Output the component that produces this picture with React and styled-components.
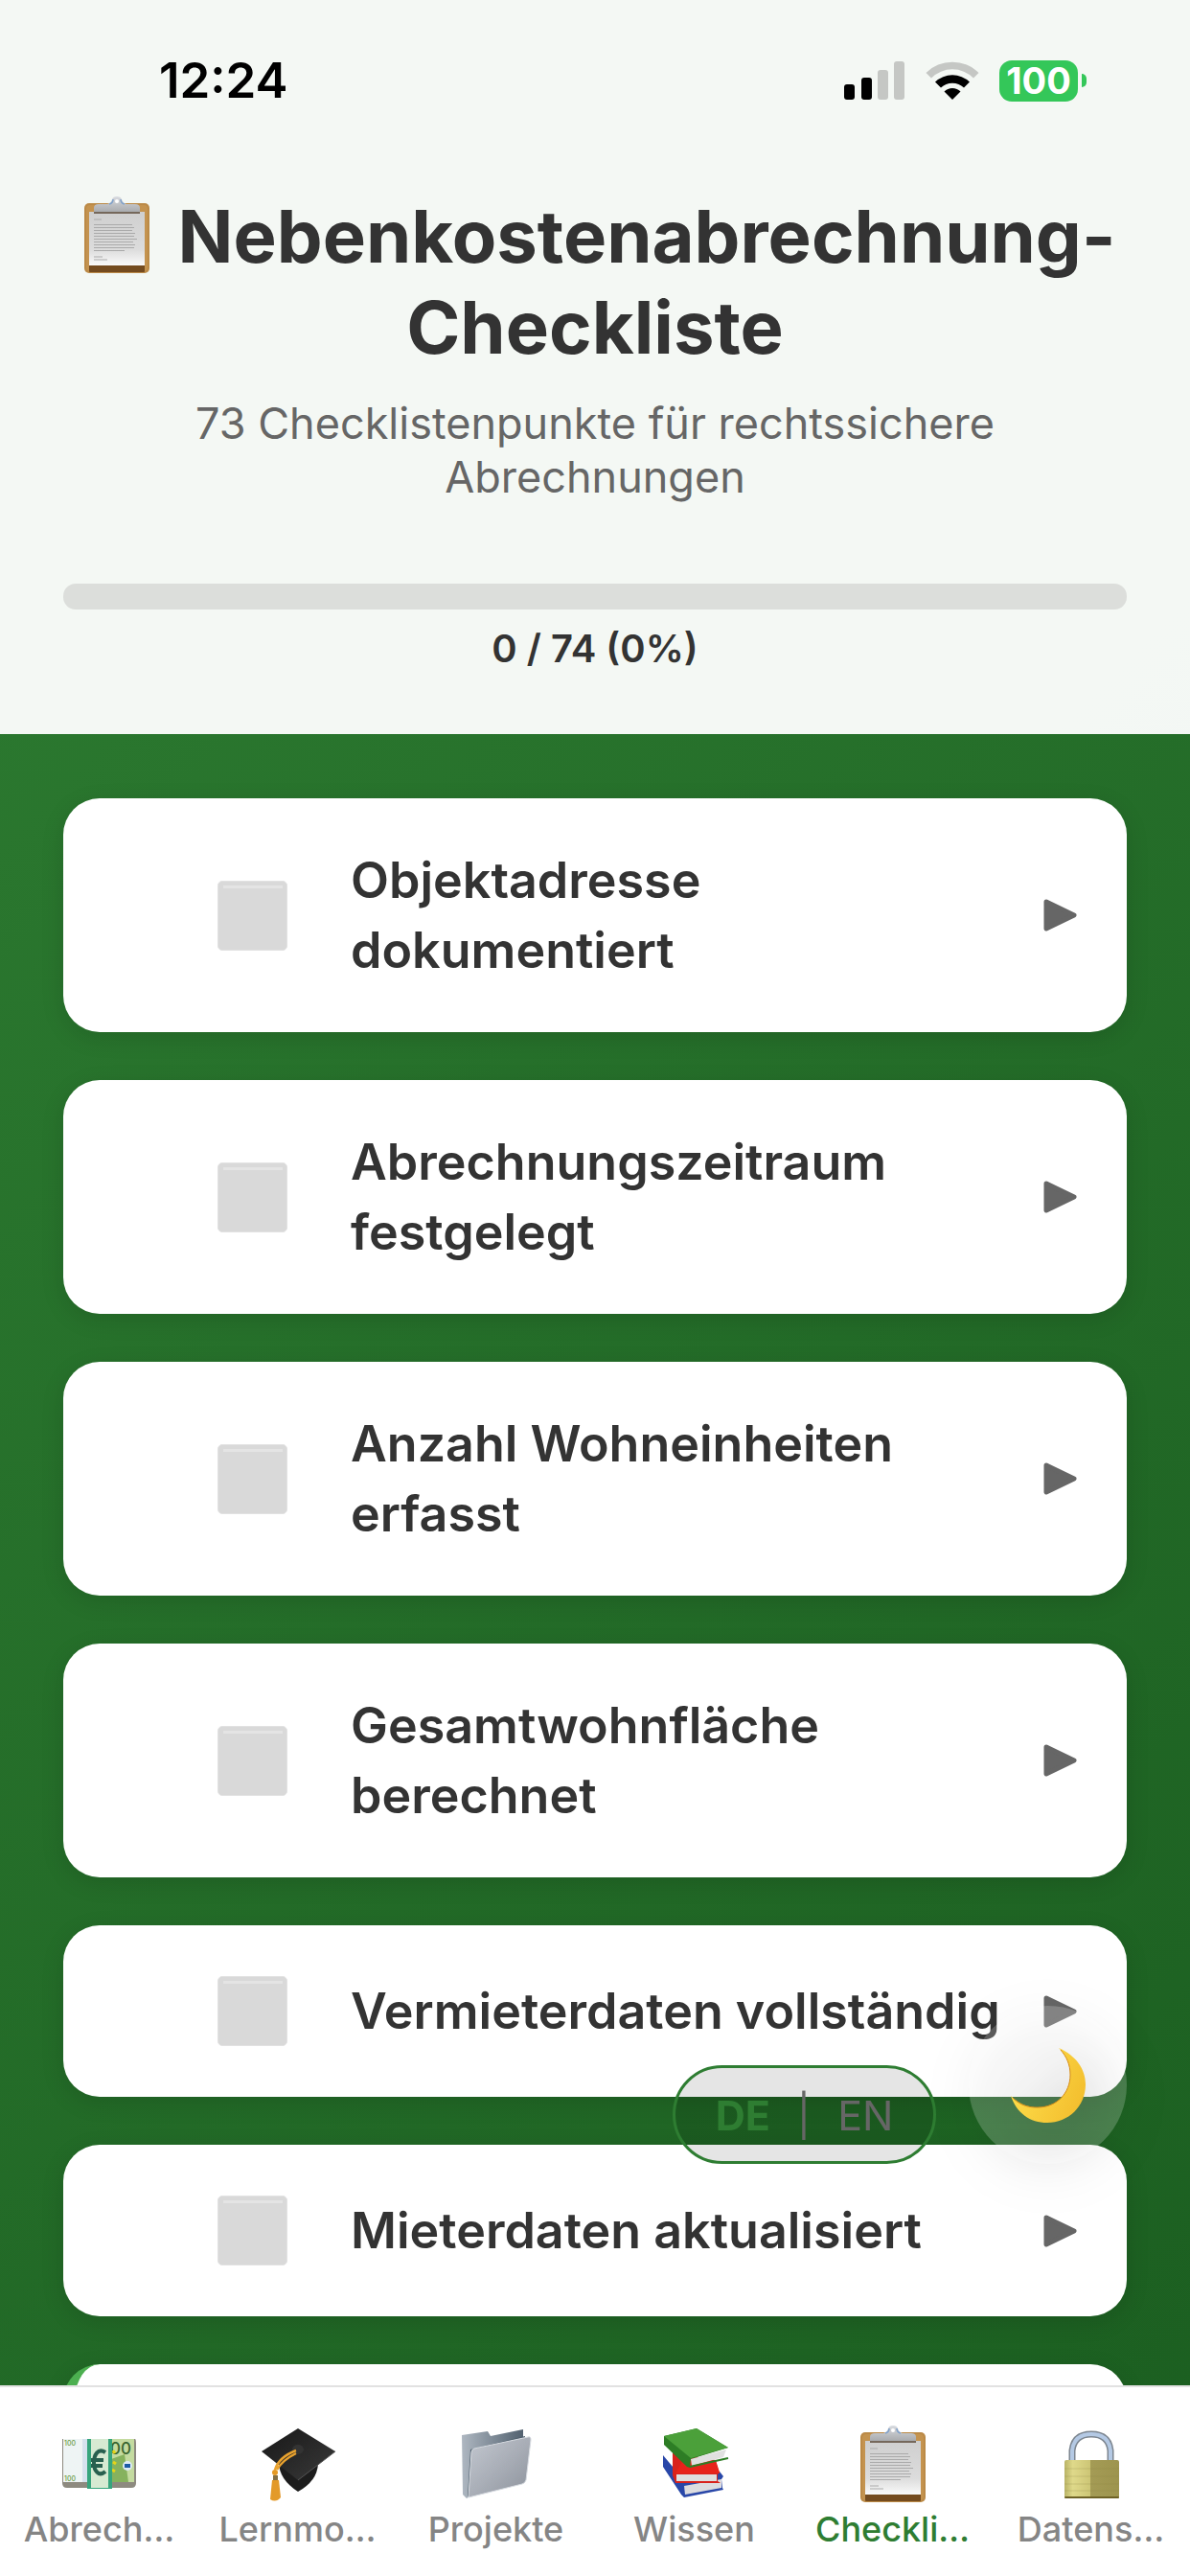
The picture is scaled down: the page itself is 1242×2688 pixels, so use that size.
import React from "react";
import styled, { createGlobalStyle } from "styled-components";

const Global = createGlobalStyle`
  *, *::before, *::after { box-sizing: border-box; }
  body {
    margin: 0;
    font-family: Inter, "Liberation Sans", sans-serif;
    color: #333;
  }
`;

const Screen = styled.div`
  display: flex;
  flex-direction: column;
  height: 100vh;
  overflow: hidden;
  background: linear-gradient(135deg, #2e7d32 0%, #1b5e20 100%);
`;

const Header = styled.header`
  flex: none;
  padding-bottom: 65px;
  background: rgba(255, 255, 255, 0.95);
`;

const StatusBar = styled.div`
  display: flex;
  align-items: center;
  justify-content: space-between;
  padding: 54px 108px 0 166px;
  height: 114px;
`;

const Time = styled.time`
  font-size: 51px;
  line-height: 60px;
  font-weight: 600;
  color: #000;
`;

const StatusIcons = styled.div`
  display: flex;
  align-items: center;
  gap: 21px;
`;

const Battery = styled.div`
  display: flex;
  align-items: center;
  gap: 4px;
`;

const BatteryLevel = styled.span`
  width: 82px;
  height: 43px;
  border-radius: 13px;
  background: #34c759;
  color: #fff;
  font-size: 38px;
  line-height: 43px;
  font-weight: 700;
  text-align: center;
`;

const BatteryTip = styled.span`
  width: 5px;
  height: 14px;
  border-radius: 0 7px 7px 0;
  background: #34c759;
`;

const Heading = styled.div`
  padding: 85px 66px 0;
  text-align: center;
`;

const Title = styled.h1`
  margin: 0;
  font-size: 76px;
  line-height: 95px;
  font-weight: 700;
  white-space: pre-line;

  svg {
    width: 72px;
    height: 80px;
    margin: 0 28px 0 8px;
    vertical-align: -11px;
  }
`;

const Subtitle = styled.p`
  margin: 25px 0 0;
  font-size: 45px;
  line-height: 56px;
  color: #666;
  white-space: pre-line;
`;

const Progress = styled.div`
  display: flex;
  flex-direction: column;
  gap: 17px;
  padding: 83px 66px 0;
`;

const Track = styled.div`
  height: 27px;
  border-radius: 13px;
  background: #dcdedb;
  overflow: hidden;
`;

const Fill = styled.div`
  height: 100%;
  background: #4caf50;
`;

const Count = styled.p`
  margin: 0;
  font-size: 40px;
  line-height: 48px;
  font-weight: 600;
  text-align: center;
`;

const List = styled.ul`
  flex: 1;
  min-height: 0;
  margin: 0;
  padding: 67px 66px 0;
  list-style: none;
  overflow: hidden;
  display: flex;
  flex-direction: column;
  gap: 50px;
`;

const Card = styled.li`
  flex: none;
  display: flex;
  align-items: center;
  min-height: 179px;
  padding: 49px 52px 49px 161px;
  border-radius: 38px;
  background: #fff;
  box-shadow: 0 6px 24px rgba(0, 0, 0, 0.12);
  ${(p) => p.$accent && "border-left: 12px solid #4caf50; padding-left: 149px;"}
`;

const Check = styled.input`
  appearance: none;
  flex: none;
  width: 73px;
  height: 73px;
  margin: 0 66px 0 0;
  border: 1px solid #e2e2e2;
  border-radius: 5px;
  background: linear-gradient(#e4e4e4, #e4e4e4) center 4px / 62px 3px no-repeat #d9d9d9;
`;

const Label = styled.label`
  flex: 1;
  font-size: 52px;
  line-height: 73px;
  font-weight: 600;
  white-space: pre-line;
`;

const Expand = styled.button`
  flex: none;
  display: flex;
  padding: 0;
  border: 0;
  background: none;
  color: #666;
`;

const TabBar = styled.nav`
  flex: none;
  display: grid;
  grid-template-columns: repeat(6, 1fr);
  height: 199px;
  border-top: 2px solid #e2e2e2;
  background: #fff;
`;

const Tab = styled.a`
  display: flex;
  flex-direction: column;
  align-items: center;
  gap: 6px;
  padding-top: 40px;
  font-size: 36px;
  line-height: 44px;
  font-weight: 500;
  white-space: nowrap;
  text-decoration: none;
  color: ${(p) => (p.$active ? "#2e7d32" : "#858585")};

  svg { width: 80px; height: 80px; }
`;

const Floating = styled.div`
  position: fixed;
  right: 66px;
  bottom: 430px;
  display: flex;
  align-items: flex-end;
  gap: 34px;
`;

const Language = styled.button`
  display: flex;
  align-items: center;
  justify-content: center;
  gap: 28px;
  width: 275px;
  height: 103px;
  padding: 0;
  border: 3px solid #2e7d32;
  border-radius: 52px;
  background: rgba(0, 0, 0, 0.1);
  font-family: inherit;
  font-size: 43px;
  line-height: 56px;
`;

const LanguagePart = styled.span`
  font-weight: ${(p) => (p.$active ? 700 : 400)};
  color: ${(p) => (p.$active ? "#2e7d32" : "#666")};
`;

const ThemeToggle = styled.button`
  display: flex;
  align-items: center;
  justify-content: center;
  width: 165px;
  height: 165px;
  padding: 0;
  border: 0;
  border-radius: 50%;
  background: rgba(255, 255, 255, 0.2);
  filter: drop-shadow(0 12px 24px rgba(0, 0, 0, 0.25));
`;

const SignalIcon = () => (
  <svg width="64" height="40" viewBox="0 0 64 40" aria-hidden="true">
    <rect x="0" y="24" width="11" height="16" rx="3" fill="#000" />
    <rect x="18" y="17" width="11" height="23" rx="3" fill="#000" />
    <rect x="35" y="9" width="11" height="31" rx="3" fill="#c5c7c4" />
    <rect x="52" y="0" width="11" height="40" rx="3" fill="#c5c7c4" />
  </svg>
);

const WifiIcon = () => (
  <svg width="56" height="40" viewBox="0 0 56 40" aria-hidden="true">
    <path d="M0.500 12 A39 39 0 0 1 55.500 12 L50 17.500 A31 31 0 0 0 6 17.500 Z" fill="#c5c7c4" />
    <path d="M10 21.500 A26 26 0 0 1 46 21.500 L40 27.500 A17.500 17.500 0 0 0 16 27.500 Z" fill="#000" />
    <path d="M19.500 31.500 A12 12 0 0 1 36.500 31.500 L28 40 Z" fill="#000" />
  </svg>
);

const ArrowIcon = () => (
  <svg width="35" height="34" viewBox="0 0 35 34" aria-hidden="true">
    <path d="M3 3 L32 17 L3 31 Z" fill="currentColor" stroke="currentColor" strokeWidth="5" strokeLinejoin="round" />
  </svg>
);

const ClipboardIcon = () => (
  <svg viewBox="0 0 72 80" aria-hidden="true">
    <defs>
      <linearGradient id="paper" x1="0" y1="0" x2="0" y2="1">
        <stop offset="0" stopColor="#cfcfcf" />
        <stop offset="0.7" stopColor="#dcdcdc" />
        <stop offset="1" stopColor="#fafafa" />
      </linearGradient>
      <linearGradient id="clip" x1="0" y1="0" x2="0" y2="1">
        <stop offset="0" stopColor="#d8dbe0" />
        <stop offset="1" stopColor="#a9abae" />
      </linearGradient>
    </defs>
    <rect x="2" y="7" width="68" height="73" rx="5" fill="#bb8a47" />
    <rect x="4" y="9" width="64" height="69" rx="4" fill="#c4934f" />
    <rect x="7" y="71" width="58" height="8" rx="1" fill="#744b1f" />
    <rect x="7" y="16" width="58" height="56" fill="url(#paper)" />
    <g stroke="#aaaaaa" strokeWidth="1">
      <path d="M12 24 h8 M12 29.500 h40 M12 32.500 h42 M12 35.500 h40 M12 38.500 h43 M12 41.500 h42 M12 44.500 h45 M12 47.500 h41 M12 50.500 h43 M12 53.500 h42 M12 56.500 h32 M12 63 h9 M12 66 h14" />
    </g>
    <rect x="12" y="15" width="48" height="3" fill="#75685b" />
    <path d="M12 16 V12 Q12 8 17 8 H26 Q30 7 31 3 Q32 0 36 0 Q40 0 41 3 Q42 7 46 8 H55 Q60 8 60 12 V16 Z" fill="url(#clip)" />
    <path d="M28 8 Q32 7 32 3 M44 8 Q40 7 40 3" stroke="#7ea0ca" strokeWidth="1.500" fill="none" />
    <circle cx="36" cy="5" r="2" fill="#fff" />
  </svg>
);

const MoneyIcon = () => (
  <svg viewBox="0 0 80 80" aria-hidden="true">
    <path d="M1 14 H77 Q78 14 78 20 V60 Q78 65 73 65 H6 Q1 65 1 60 Z" fill="#8d8a80" />
    <rect x="2" y="14" width="26" height="45" fill="#eef4f4" />
    <rect x="22" y="14" width="6" height="45" fill="#d5e2ee" />
    <rect x="51" y="14" width="25" height="45" fill="#c4dba0" />
    <path d="M52 35 L66 30 L70 59 H52 Z" fill="#86b25e" />
    <g fontFamily="Inter, sans-serif">
      <text x="3" y="21" fontSize="7" fill="#6c9c4a">100</text>
      <text x="3" y="58" fontSize="7" fill="#6c9c4a">100</text>
      <text x="51" y="30" fontSize="17" fill="#39652f">00</text>
    </g>
    <path d="M54 26 l2 3 M54 38 l3 2 M53 46 l3 2" stroke="#e4d419" strokeWidth="3" />
    <circle cx="69" cy="42" r="5" fill="#dceaf6" />
    <path d="M66 40 h6 v4 h-6 z" fill="#1c5ba6" />
    <rect x="27" y="14" width="26" height="52" fill="#36a57d" />
    <rect x="31" y="14" width="18" height="51" fill="#d6ead2" />
    <path d="M46 28 C38 23 34 31 34 39 C34 47 39 54 46 48 M31 36 H44 M31 42 H43" fill="none" stroke="#28604f" strokeWidth="4" />
  </svg>
);

const CapIcon = () => (
  <svg viewBox="0 0 80 80" aria-hidden="true">
    <defs>
      <linearGradient id="board" x1="0" y1="0" x2="1" y2="1">
        <stop offset="0" stopColor="#171717" />
        <stop offset="1" stopColor="#3a3a3a" />
      </linearGradient>
    </defs>
    <path d="M20 38 Q20 56 40 69 Q60 58 61 40 Z" fill="#1d1d1d" />
    <path d="M40 3 L79 27 L40 57 L2 27 Z" fill="url(#board)" />
    <path d="M40 57 L79 27" stroke="#555" strokeWidth="1" />
    <ellipse cx="40" cy="25" rx="6" ry="5" fill="#333" />
    <path d="M38 26 Q20 33 16 46 M38 29 Q24 36 18 46" fill="none" stroke="#e9a22e" strokeWidth="2.500" />
    <circle cx="16" cy="49" r="3" fill="#e59a25" />
    <rect x="14" y="52" width="5" height="5" fill="#847044" />
    <path d="M13 57 H20 L22 75 Q17 81 11 77 Z" fill="#e39a2a" />
  </svg>
);

const FolderIcon = () => (
  <svg viewBox="0 0 80 80" aria-hidden="true">
    <defs>
      <linearGradient id="front" x1="0" y1="0" x2="1" y2="1">
        <stop offset="0" stopColor="#c3c8d0" />
        <stop offset="0.5" stopColor="#a9aeb7" />
        <stop offset="1" stopColor="#8c929b" />
      </linearGradient>
      <linearGradient id="back" x1="0" y1="0" x2="1" y2="0">
        <stop offset="0" stopColor="#aeb7c1" />
        <stop offset="1" stopColor="#52616f" />
      </linearGradient>
    </defs>
    <path d="M4 10 L31 6 L34 11 L68 4 V40 L9 76 L5 72 Z" fill="url(#back)" />
    <path d="M13 25 L70 11 V40 L10 74 Z" fill="#4e5e6c" />
    <path d="M17 24 L73 12 Q76 11 76 15 L71 57 Q70 60 67 61 L11 75 L14 28 Q14 25 17 24 Z" fill="url(#front)" stroke="#d8dce2" strokeWidth="1" />
  </svg>
);

const BooksIcon = () => (
  <svg viewBox="0 0 80 80" aria-hidden="true">
    <path d="M7 31 L28 56 L66 48 L70 53 L68 56 L69 65 L70 67 L29 75 L26 72 L7 43 Z" fill="#2947a8" />
    <path d="M29 63 L68 56 V65 L30 72 Z" fill="#dcdcdf" />
    <path d="M17 28 L62 36 L66 49 L64 51 V58 L67 60 L20 60 L17 52 Z" fill="#d8221c" />
    <path d="M21 51 H63 V58 H21 Z" fill="#dedede" />
    <path d="M20 50 H66 L62 38 L30 32 Z" fill="#e7231b" />
    <path d="M8 11 L42 3 L75 23 L36 35 L35 44 L32 43 L8 20 Z" fill="#2d7d25" />
    <path d="M8 11 L42 3 L75 23 L36 34 Z" fill="#4ba03a" />
    <path d="M36 35 L73 25 L70 33 L37 42 Z" fill="#e0e0e0" />
    <path d="M35 43 L75 34" stroke="#2d7d25" strokeWidth="2" />
  </svg>
);

const LockIcon = () => (
  <svg viewBox="0 0 80 80" aria-hidden="true">
    <defs>
      <linearGradient id="brass" x1="0" y1="0" x2="1" y2="0">
        <stop offset="0" stopColor="#b9b366" />
        <stop offset="0.15" stopColor="#dfd98a" />
        <stop offset="0.47" stopColor="#cdc676" />
        <stop offset="0.48" stopColor="#a49b55" />
        <stop offset="1" stopColor="#9d944e" />
      </linearGradient>
    </defs>
    <path d="M20 38 V26 Q22 9 40 9 Q58 9 60 26 V38" fill="none" stroke="#7d8690" strokeWidth="7" />
    <path d="M20 38 V26 Q22 9 40 9 Q58 9 60 26 V38" fill="none" stroke="#b4c9e4" strokeWidth="4" />
    <rect x="12" y="36" width="57" height="40" rx="2" fill="url(#brass)" />
    <path d="M12 45 h57 M12 53 h57 M12 61 h57 M12 68 h57" stroke="#8c8342" strokeWidth="1" opacity="0.25" />
    <rect x="12" y="74" width="57" height="2" rx="1" fill="#6d6125" />
  </svg>
);

const MoonIcon = () => (
  <svg width="78" height="78" viewBox="0 0 78 78" aria-hidden="true">
    <defs>
      <linearGradient id="moon" x1="0" y1="0.200" x2="1" y2="0.600">
        <stop offset="0" stopColor="#ffe14d" />
        <stop offset="1" stopColor="#f3bf2f" />
      </linearGradient>
    </defs>
    <path
      d="M50 0 C68 8 78 22 78 38 C78 61 60 78 38 78 C20 78 6 68 0 50 C10 60 20 62 28 62 C48 62 62 47 62 28 C62 16 57 7 50 0 Z"
      fill="url(#moon)"
    />
    <path d="M2 52 C11 61 20 62 28 62 C48 62 62 47 62 28 C62 17 58 9 52 2" fill="none" stroke="#d48a17" strokeWidth="1" />
  </svg>
);

const items = [
  "Objektadresse\ndokumentiert",
  "Abrechnungszeitraum\nfestgelegt",
  "Anzahl Wohneinheiten\nerfasst",
  "Gesamtwohnfläche\nberechnet",
  "Vermieterdaten vollständig",
  "Mieterdaten aktualisiert",
];

const tabs = [
  { label: "Abrech…", Icon: MoneyIcon },
  { label: "Lernmo…", Icon: CapIcon },
  { label: "Projekte", Icon: FolderIcon },
  { label: "Wissen", Icon: BooksIcon },
  { label: "Checkli…", Icon: ClipboardIcon, active: true },
  { label: "Datens…", Icon: LockIcon },
];

export default function App() {
  const done = 0;
  const total = 74;
  const percent = Math.round((done / total) * 100);

  return (
    <Screen>
      <Global />
      <Header>
        <StatusBar>
          <Time>12:24</Time>
          <StatusIcons>
            <SignalIcon />
            <WifiIcon />
            <Battery>
              <BatteryLevel>100</BatteryLevel>
              <BatteryTip />
            </Battery>
          </StatusIcons>
        </StatusBar>
        <Heading>
          <Title>
            <ClipboardIcon />
            {"Nebenkostenabrechnung-\nCheckliste"}
          </Title>
          <Subtitle>{"73 Checklistenpunkte für rechtssichere\nAbrechnungen"}</Subtitle>
        </Heading>
        <Progress>
          <Track>
            <Fill style={{ width: `${percent}%` }} />
          </Track>
          <Count>{`${done} / ${total} (${percent}%)`}</Count>
        </Progress>
      </Header>

      <List>
        {items.map((text, i) => (
          <Card key={text}>
            <Check type="checkbox" id={`item-${i}`} />
            <Label htmlFor={`item-${i}`}>{text}</Label>
            <Expand type="button" aria-label="Details">
              <ArrowIcon />
            </Expand>
          </Card>
        ))}
        <Card $accent />
      </List>

      <TabBar>
        {tabs.map(({ label, Icon, active }) => (
          <Tab key={label} href="#" $active={active}>
            <Icon />
            {label}
          </Tab>
        ))}
      </TabBar>

      <Floating>
        <Language type="button">
          <LanguagePart $active>DE</LanguagePart>
          <LanguagePart>|</LanguagePart>
          <LanguagePart>EN</LanguagePart>
        </Language>
        <ThemeToggle type="button" aria-label="Dunkelmodus">
          <MoonIcon />
        </ThemeToggle>
      </Floating>
    </Screen>
  );
}
